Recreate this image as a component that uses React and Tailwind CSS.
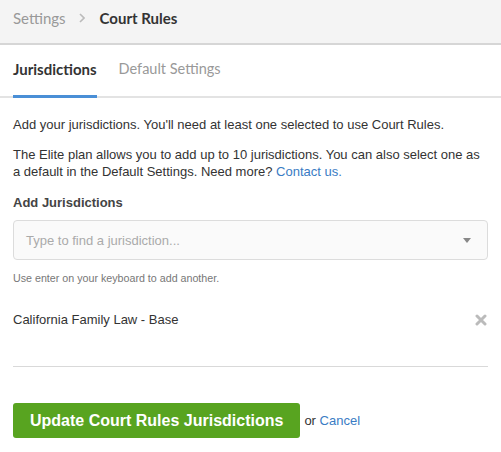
const App = () => {
    return (
        <div className="w-[501px] h-[452px] bg-white text-[#333] overflow-hidden" style={{ fontFamily: '"Liberation Sans", Arial, sans-serif' }}>
            <div className="h-[45px] bg-[#f4f4f4] border-b-2 border-[#d6d6d6] flex items-center px-[13px] pb-[7px] font-['Lato',sans-serif] text-[15px]">
                <span className="text-[#999]">Settings</span>
                <svg width="6" height="10" viewBox="0 0 6 10" className="ml-[13px] mr-[15px]">
                    <path d="M1 1l4 4-4 4" fill="none" stroke="#bbb" strokeWidth="1.6" />
                </svg>
                <span className="font-bold text-[#333]">Court Rules</span>
            </div>

            <div className="h-[53px] border-b-2 border-[#e3e3e3] flex items-stretch px-[13px] font-['Lato',sans-serif]">
                <div className="flex items-center text-[15px] font-bold text-[#333] border-b-[3px] border-[#4a8fd6] -mb-[2px] pb-[1px]">Jurisdictions</div>
                <div className="flex items-center ml-[22px] text-[14.5px] text-[#999] pb-[3px]">Default Settings</div>
            </div>

            <div className="px-[13px] text-[13px] leading-[17px]">
                <p className="mt-[18px]">Add your jurisdictions. You'll need at least one selected to use Court Rules.</p>
                <p className="mt-[13px]">
                    The Elite plan allows you to add up to 10 jurisdictions. You can also select one as a default in the Default Settings. Need more?{' '}
                    <a className="text-[#3a7cc4]">Contact us.</a>
                </p>
                <div className="mt-[14px] font-bold text-[13px] text-[#444]">Add Jurisdictions</div>
                <div className="mt-[9px] h-[40px] border border-[#dcdcdc] rounded-[4px] bg-[#fafafa] flex items-center justify-between pl-[12px] pr-[16px]">
                    <span className="text-[13px] text-[#aaa]">Type to find a jurisdiction...</span>
                    <svg width="8" height="5" viewBox="0 0 8 5"><path d="M0 0h8L4 5z" fill="#888" /></svg>
                </div>
                <div className="mt-[10px] text-[10.7px] text-[#777]">Use enter on your keyboard to add another.</div>
                <div className="mt-[24px] flex items-center justify-between">
                    <span>California Family Law - Base</span>
                    <svg width="12" height="12" viewBox="0 0 12 12" className="mr-[1px]">
                        <path d="M2 2L10 10M10 2L2 10" stroke="#bbb" strokeWidth="3" strokeLinecap="round" />
                    </svg>
                </div>
                <div className="mt-[38px] border-t border-[#d9d9d9]"></div>
                <div className="mt-[36px] flex items-center">
                    <button className="h-[35px] px-[17px] bg-[#58a420] rounded-[3px] text-white font-bold text-[16px]">Update Court Rules Jurisdictions</button>
                    <span className="ml-[4px]">or <a className="text-[#3a7cc4]">Cancel</a></span>
                </div>
            </div>
        </div>
    );
};

export default App;
